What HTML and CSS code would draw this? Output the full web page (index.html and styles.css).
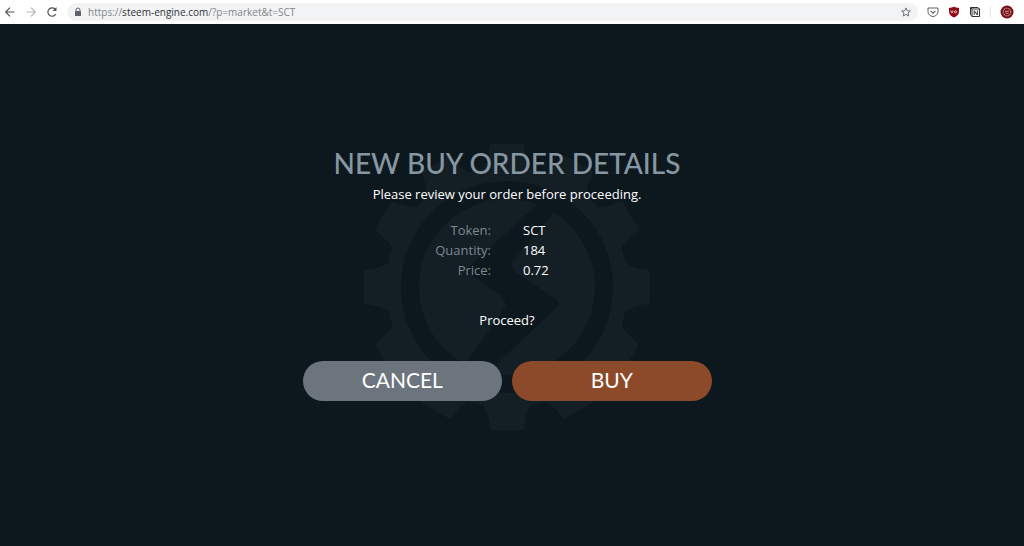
FILE: index.html
```html
<!DOCTYPE html>
<html lang="en">
<head>
    <meta charset="UTF-8">
    <meta name="viewport" content="width=device-width, initial-scale=1.0">
    <title>Steem Engine - Market</title>
    <link rel="stylesheet" href="styles.css">
</head>
<body>
    <header class="toolbar">
        <button class="tool-btn" type="button" aria-label="Back">
            <svg width="12" height="12" viewBox="0 0 12 12" fill="none" stroke="#505357" stroke-width="1.2"><path d="M10.5 6H2M6 1.7 1.7 6 6 10.3"/></svg>
        </button>
        <button class="tool-btn" type="button" aria-label="Forward">
            <svg width="12" height="12" viewBox="0 0 12 12" fill="none" stroke="#b4b6b8" stroke-width="1.2"><path d="M1.5 6H10M6 1.7 10.3 6 6 10.3"/></svg>
        </button>
        <button class="tool-btn" type="button" aria-label="Reload">
            <svg width="12" height="12" viewBox="0 0 12 12" fill="none" stroke="#505357" stroke-width="1.2"><path d="M9.8 8A4.2 4.2 0 1 1 9 3"/><path d="M10.5 1v4h-4z" fill="#505357" stroke="none"/></svg>
        </button>
        <div class="address-bar">
            <svg width="8" height="10" viewBox="0 0 8 10"><path d="M2 4V3a2 2 0 0 1 4 0v1" fill="none" stroke="#5f6368"/><rect x="1" y="4" width="6" height="5" rx="0.6" fill="#5f6368"/></svg>
            <a class="url" href="#">https://<span class="host">steem-engine.com</span>/?p=market&amp;t=SCT</a>
            <button class="star-btn" type="button" aria-label="Bookmark">
                <svg width="10" height="10" viewBox="0 0 10 10" fill="none" stroke="#5f6368" stroke-width="0.9"><path d="M5 .9 6.2 3.7 9.3 4 7 6l.7 3L5 7.4 2.3 9 3 6 .7 4l3.1-.3z"/></svg>
            </button>
        </div>
        <div class="extensions">
            <button class="tool-btn" type="button" aria-label="Pocket">
                <svg width="12" height="12" viewBox="0 0 12 12" fill="none" stroke="#5f6368"><path d="M1 2h10v3.5a5 5 0 0 1-10 0z"/><path d="m3.6 4.9 2.4 2.3 2.4-2.3" stroke-width="1.2"/></svg>
            </button>
            <button class="tool-btn" type="button" aria-label="Blocker">
                <svg width="12" height="12" viewBox="0 0 12 12"><path d="M6 .6C7.6 1.6 9 1.9 11 2v3.6c0 3-2.2 4.7-5 6-2.8-1.3-5-3-5-6V2c2-.1 3.4-.4 5-1.4z" fill="#900b12"/><path d="M3 4.5v1.2a.9.9 0 0 0 1.8 0V4.5M7.5 4.7a1.1 1.1 0 1 0 .1 0z" fill="none" stroke="#fff" stroke-width="0.8"/></svg>
            </button>
            <button class="tool-btn" type="button" aria-label="Notes">
                <svg width="12" height="12" viewBox="0 0 12 12" fill="none" stroke="#333"><path d="M3 3h7.5v7.5H3z" fill="#fff"/><path d="M3 10.5 1.5 8.5v-7H9L10.5 3M1.5 1.5 3 3"/><path d="M5.2 9V4.7L8.4 9V4.5"/></svg>
            </button>
            <span class="divider"></span>
            <button class="tool-btn" type="button" aria-label="Profile">
                <svg width="14" height="14" viewBox="0 0 14 14"><circle cx="7" cy="7" r="6.5" fill="#741016"/><circle cx="7" cy="7" r="3.8" fill="none" stroke="#c98a8a" stroke-width="1.2" stroke-dasharray="1.4 .6"/><path d="M5 6.3h4M5.5 8.2h3" stroke="#dba9a7" stroke-width=".9"/></svg>
            </button>
        </div>
    </header>

    <main class="overlay">
        <svg class="gear" viewBox="-143 -143 286 286" aria-hidden="true">
            <defs>
                <path id="teeth" d="M-24-114Q-17-124-15-141H15Q17-124 24-114V114Q17 124 15 141H-15Q-17 124-24 114z"/>
            </defs>
            <g fill="#141e25" stroke="#141e25" stroke-width="4" stroke-linejoin="round">
                <circle r="119"/>
                <use href="#teeth"/>
                <use href="#teeth" transform="rotate(30)"/>
                <use href="#teeth" transform="rotate(60)"/>
                <use href="#teeth" transform="rotate(90)"/>
                <use href="#teeth" transform="rotate(120)"/>
                <use href="#teeth" transform="rotate(150)"/>
            </g>
            <circle r="97" fill="none" stroke="#0d171e" stroke-width="18"/>
            <path d="M30-82-38-20Q-42-16-37-13L-7 8Q1 14-3 22L-44 80-20 86 50 20Q54 16 49 12L8-15Q2-20 5-25L50-78z" fill="#0d171e"/>
        </svg>

        <form class="dialog">
            <h1>NEW BUY ORDER DETAILS</h1>
            <p class="intro">Please review your order before proceeding.</p>
            <table class="details">
                <tbody>
                    <tr><th scope="row">Token:</th><td>SCT</td></tr>
                    <tr><th scope="row">Quantity:</th><td>184</td></tr>
                    <tr><th scope="row">Price:</th><td>0.72</td></tr>
                </tbody>
            </table>
            <p class="question">Proceed?</p>
            <div class="actions">
                <button class="btn btn-cancel" type="button">CANCEL</button>
                <button class="btn btn-buy" type="button">BUY</button>
            </div>
        </form>
    </main>
</body>
</html>
```

FILE: styles.css
```css
* {
    box-sizing: border-box;
}

body {
    margin: 0;
    min-height: 100vh;
    display: flex;
    flex-direction: column;
    background-color: #0d171e;
    color: #fff;
    font-family: "Open Sans", sans-serif;
    font-size: 13px;
    font-weight: 500;
}

button {
    border: none;
    cursor: pointer;
}

/* Browser toolbar */
.toolbar {
    display: flex;
    align-items: center;
    height: 24px;
    padding: 0 10px 1px 4px;
    gap: 9px;
    background-color: #fff;
}

.tool-btn,
.star-btn {
    display: flex;
    padding: 0;
    background: none;
}

.address-bar {
    flex: 1;
    display: flex;
    align-items: center;
    gap: 6px;
    height: 18px;
    padding: 0 7px;
    border-radius: 9px;
    background-color: #f1f3f4;
}

.url {
    flex: 1;
    color: #80868b;
    font-family: "Open Sans", sans-serif;
    font-size: 10px;
    font-weight: 400;
    text-decoration: none;
}

.host {
    color: #303236;
}

.extensions {
    display: flex;
    align-items: center;
    gap: 9px;
}

.divider {
    width: 1px;
    height: 12px;
    background-color: #e3e4e6;
}

/* Order confirmation */
.overlay {
    flex: 1;
    display: grid;
    place-items: center;
    padding: 4px 10px 0 0;
}

.gear,
.dialog {
    grid-area: 1 / 1;
}

.gear {
    width: 286px;
}

.dialog {
    width: 409px;
    max-width: 100%;
    padding-bottom: 28px;
    text-align: center;
}

h1 {
    margin: 0;
    color: #8797a2;
    font-family: Lato, sans-serif;
    font-size: 28px;
    font-weight: 500;
    line-height: 36px;
}

p {
    margin: 0;
    line-height: 20px;
}

.intro {
    margin-top: 3px;
}

.details {
    width: 100%;
    margin-top: 16px;
    border-collapse: collapse;
    line-height: 20px;
}

.details th,
.details td {
    width: 50%;
    padding: 0 16px;
}

.details th {
    color: #7c8992;
    font-weight: 400;
    text-align: right;
}

.details td {
    text-align: left;
}

.question {
    margin-top: 30px;
}

.actions {
    display: flex;
    gap: 10px;
    margin-top: 31px;
}

.btn {
    flex: 1;
    height: 40px;
    padding: 0 0 4px;
    border-radius: 20px;
    color: #fff;
    font-family: Lato, sans-serif;
    font-size: 21px;
}

.btn-cancel {
    background-color: #6c757d;
}

.btn-buy {
    background-color: #8c4a2b;
}
```
